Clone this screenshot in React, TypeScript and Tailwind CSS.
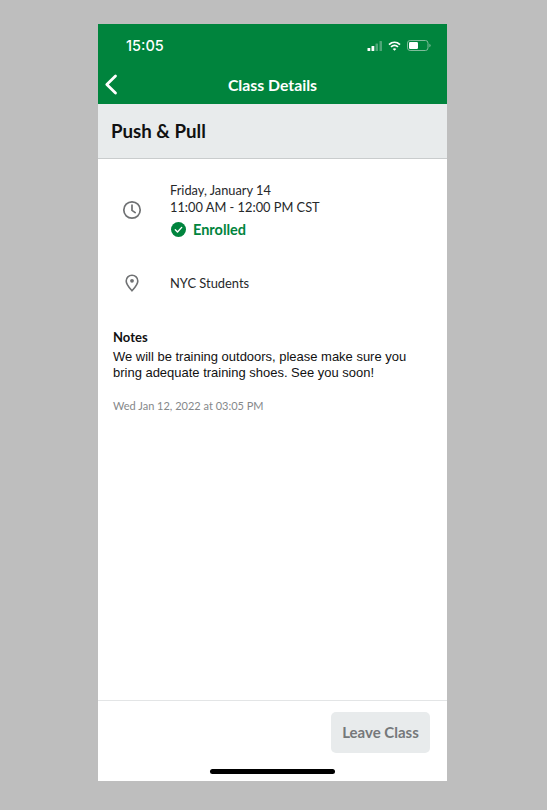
export default function App() {
  return (
    <div className="w-[547px] h-[810px] bg-[#bebebe] pt-[24px] pl-[98px] overflow-hidden font-['Lato',sans-serif]">
      <div className="w-[349px] h-[757px] bg-white flex flex-col">
        <div className="h-[80px] bg-[#00843d] text-white flex flex-col shrink-0">
          <div className="h-[43px] flex items-center justify-between pl-[28px] pr-[16px]">
            <span className="text-[14.5px] leading-[18px] font-['Inter',sans-serif] font-medium">15:05</span>
            <div className="flex items-center gap-[5px]">
              <svg width="16" height="10" viewBox="0 0 16 10">
                <rect x="0.5" y="7" width="2.8" height="3" rx="0.5" fill="#fff" />
                <rect x="4.5" y="5" width="2.8" height="5" rx="0.5" fill="#fff" />
                <rect x="8.5" y="2.5" width="2.5" height="7.5" rx="0.5" fill="#4fa678" />
                <rect x="12.5" y="0" width="2.5" height="10" rx="0.5" fill="#4fa678" />
              </svg>
              <svg width="13" height="10" viewBox="0 0 13 10" fill="none" stroke="#fff" strokeWidth="1.8">
                <path d="M1 3.6C4.3 0.7 8.7 0.7 12 3.6" />
                <path d="M3 5.9C5 4.2 8 4.2 10 5.9" />
                <path d="M6.5 9.8 4.7 7.9C5.7 7.1 7.3 7.1 8.3 7.9Z" fill="#fff" stroke="none" />
              </svg>
              <svg width="24" height="11" viewBox="0 0 24 11" fill="none" className="ml-[1px]">
                <rect x="0.5" y="0.5" width="20.5" height="10" rx="2.6" stroke="#7fbd9b" />
                <rect x="2" y="2" width="9" height="7" rx="1.2" fill="#fff" />
                <path d="M22.4 3.8C23.2 4.1 23.6 4.7 23.6 5.5C23.6 6.3 23.2 6.9 22.4 7.2Z" fill="#7fbd9b" />
              </svg>
            </div>
          </div>
          <div className="relative flex-1 flex items-center justify-center">
            <svg className="absolute left-[6px] top-[7px]" width="14" height="21" viewBox="0 0 14 21" fill="none" stroke="#fff" strokeWidth="2.8" strokeLinecap="round" strokeLinejoin="round">
              <path d="M11.5 2 2.8 10.5 11.5 19" />
            </svg>
            <span className="text-[15.8px] font-bold leading-[20px] mt-[-1px]">Class Details</span>
          </div>
        </div>

        <div className="h-[55px] bg-[#e8ebec] border-b border-[#c9cccd] flex items-center pl-[13px] pr-[14px] shrink-0">
          <span className="text-[18.7px] font-bold leading-[24px] text-[#111]">Push &amp; Pull</span>
        </div>

        <div className="flex-1 flex flex-col">
          <div className="flex pt-[23px] pl-[24px]">
            <div className="w-[48px] pt-[18px] shrink-0">
              <svg width="20" height="20" viewBox="0 0 20 20" fill="none" stroke="#6f7173" strokeWidth="1.7" strokeLinecap="round" strokeLinejoin="round">
                <circle cx="10" cy="10" r="8.2" />
                <path d="M10 5.2V10.4L13.2 12.6" />
              </svg>
            </div>
            <div className="flex flex-col">
              <span className="text-[12.8px] leading-[17px] text-[#26282a]">Friday, January 14</span>
              <span className="text-[12.8px] leading-[17px] text-[#26282a]">11:00 AM - 12:00 PM CST</span>
              <div className="flex items-center gap-[7px] mt-[4px] pl-[1px]">
                <svg width="15" height="15" viewBox="0 0 15 15" fill="none">
                  <circle cx="7.5" cy="7.5" r="7.5" fill="#00843d" />
                  <path d="M4.3 7.8 6.5 10 10.7 5.4" stroke="#fff" strokeWidth="1.4" strokeLinecap="round" strokeLinejoin="round" />
                </svg>
                <span className="text-[14.5px] font-bold leading-[19px] text-[#00843d]">Enrolled</span>
              </div>
            </div>
          </div>

          <div className="flex items-center pl-[27px] mt-[35px]">
            <div className="w-[45px] shrink-0">
              <svg className="block" width="14" height="18" viewBox="0 0 14 18" fill="none">
                <path d="M7 16.8C4.6 14 1.2 10.6 1.2 7A5.8 5.8 0 0 1 12.8 7C12.8 10.6 9.4 14 7 16.8Z" stroke="#6f7173" strokeWidth="1.6" strokeLinejoin="round" />
                <circle cx="7" cy="6.8" r="1.9" fill="#6f7173" />
              </svg>
            </div>
            <span className="text-[12.9px] leading-[17px] text-[#26282a]">NYC Students</span>
          </div>

          <div className="px-[15px] mt-[36px]">
            <div className="text-[13px] font-bold leading-[18px] text-[#111]">Notes</div>
            <p className="text-[12.98px] leading-[15.5px] text-[#111] font-['Liberation_Sans',sans-serif] mt-[3px]">
              We will be training outdoors, please make sure you<br />bring adequate training shoes. See you soon!
            </p>
            <div className="text-[11px] leading-[14px] text-[#85888a] mt-[19px]">Wed Jan 12, 2022 at 03:05 PM</div>
          </div>
        </div>

        <div className="h-[81px] border-t border-[#e3e5e6] shrink-0 flex flex-col">
          <div className="flex justify-end pr-[17px] pt-[11px]">
            <div className="w-[99px] h-[41px] rounded-[5px] bg-[#e8ebec] flex items-center justify-center text-[15px] font-bold text-[#75787a]">Leave Class</div>
          </div>
          <div className="mt-[16px] mx-auto w-[125px] h-[5px] rounded-full bg-black" />
        </div>
      </div>
    </div>
  );
}
